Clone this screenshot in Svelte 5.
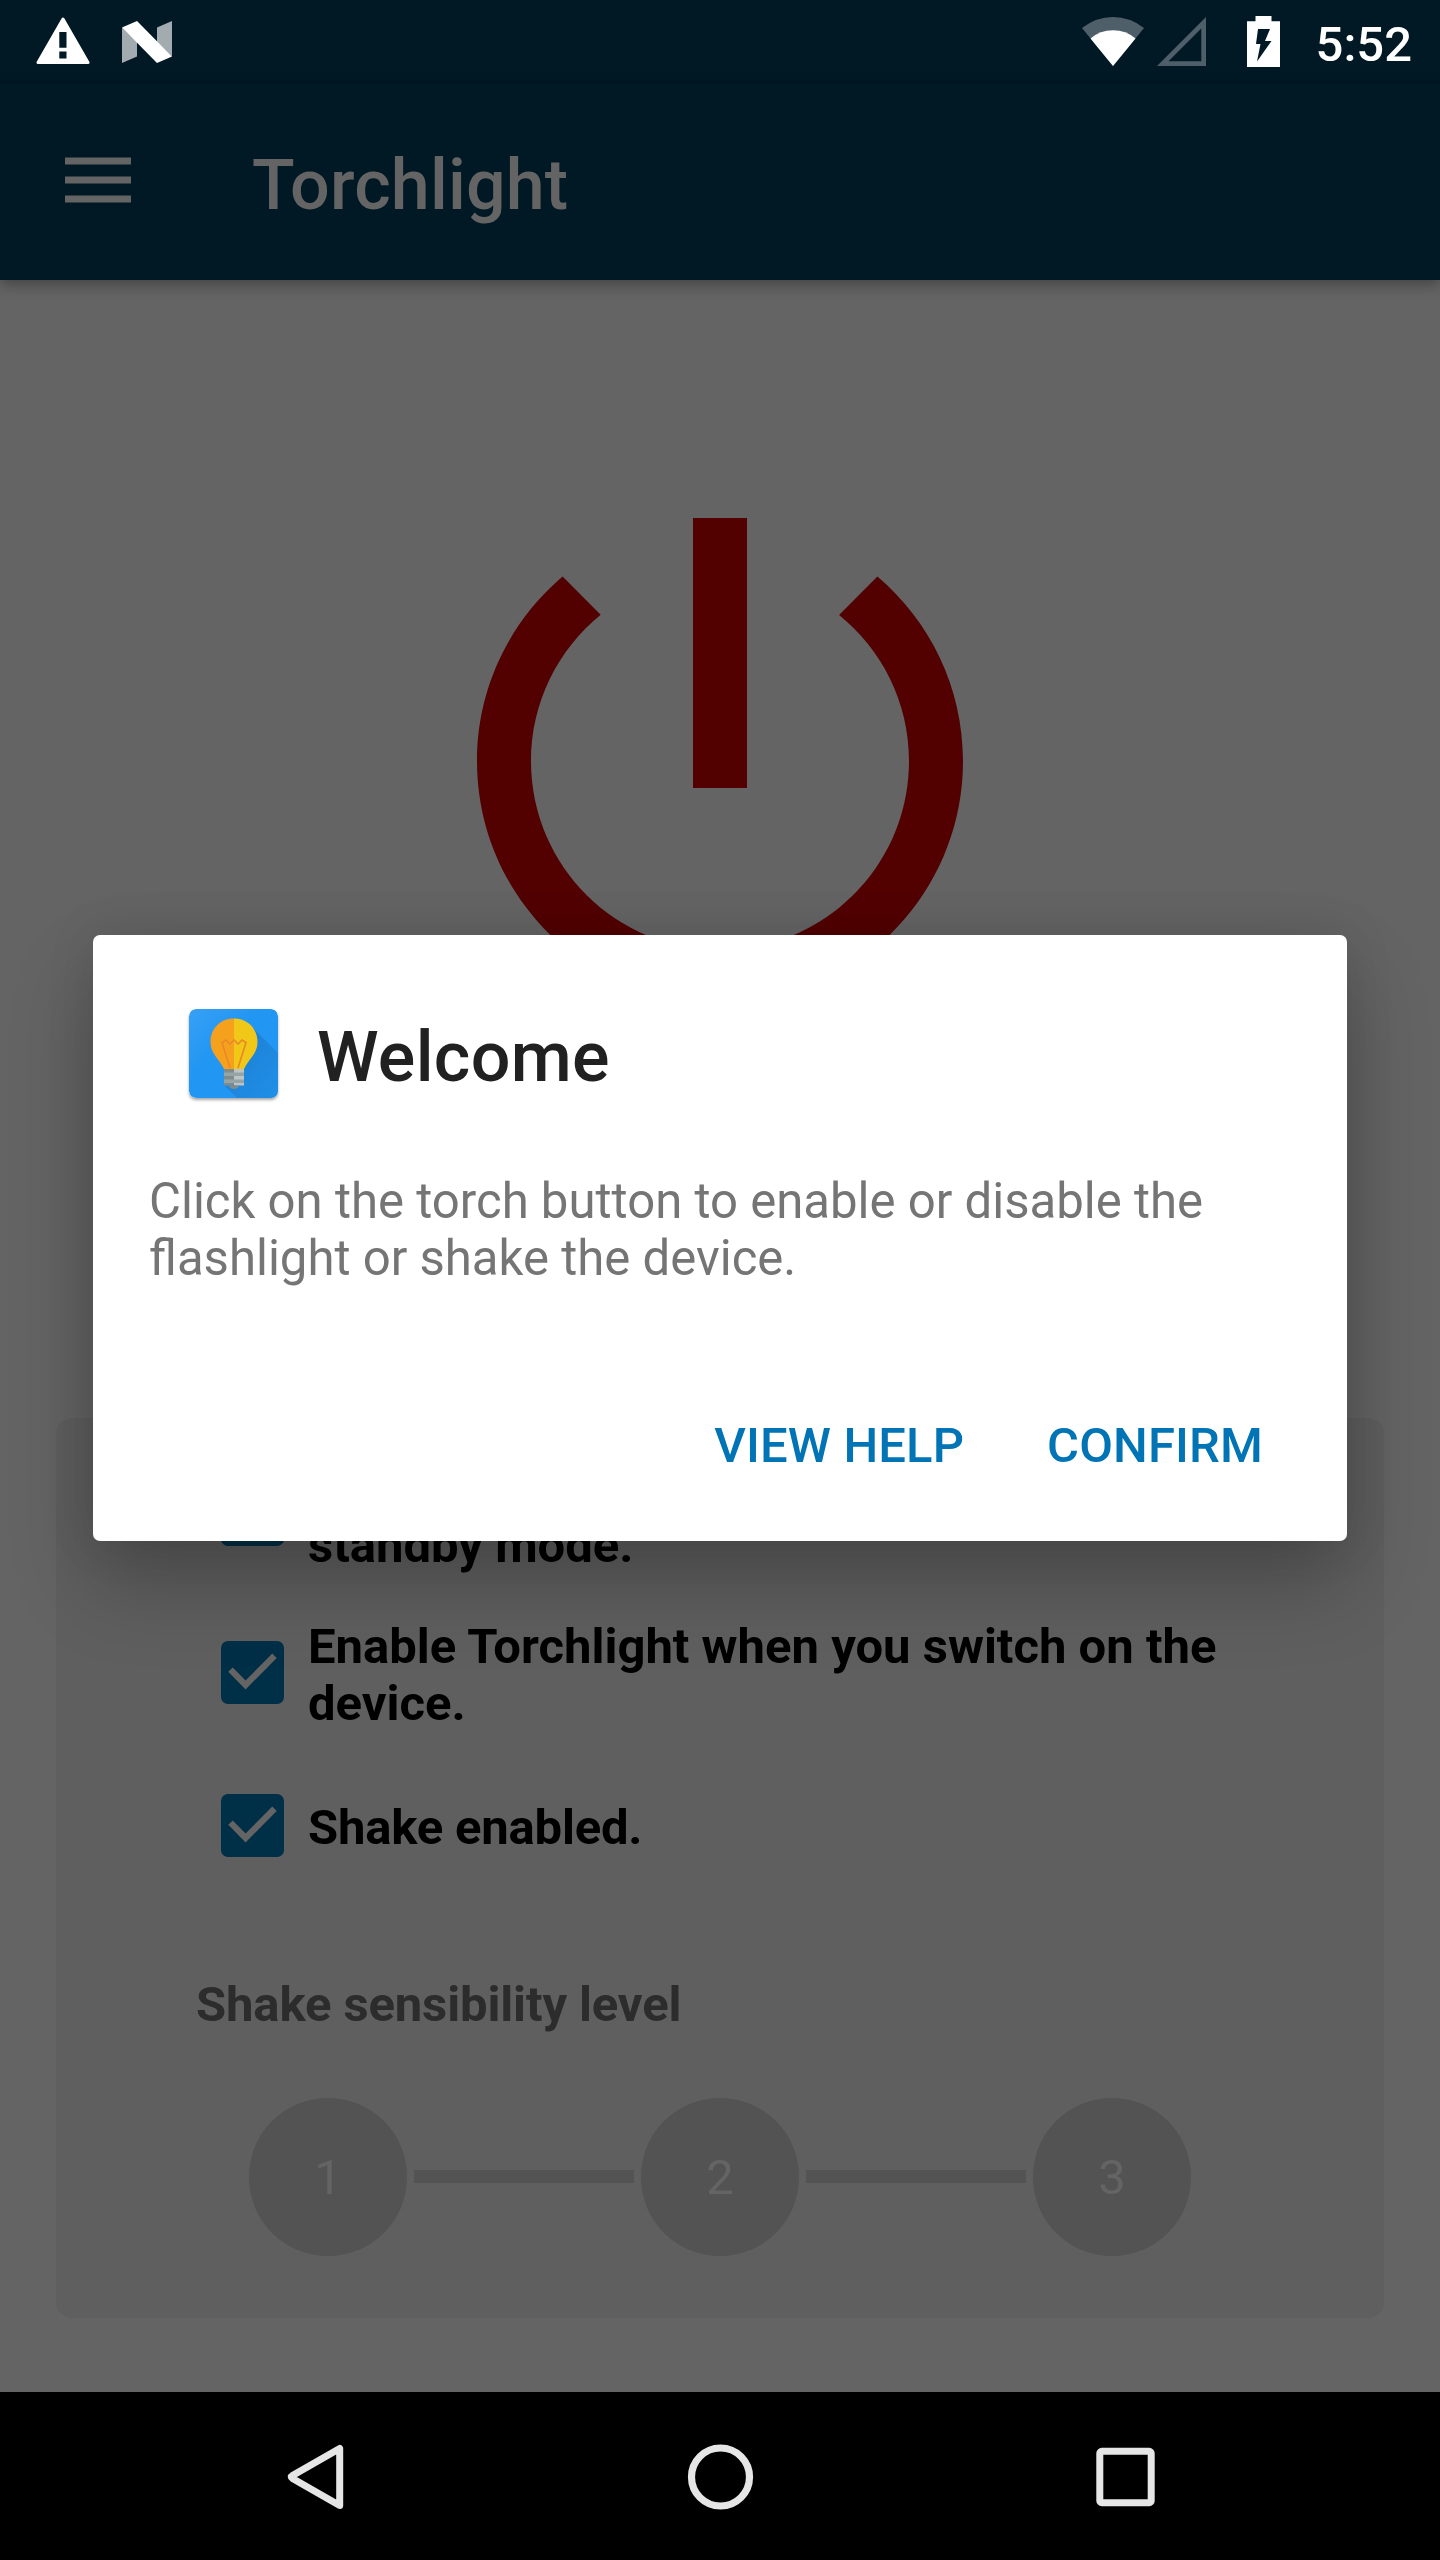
<script>
  const levels = [1, 2, 3];
</script>

{#snippet checkbox()}
  <svg class="box" viewBox="0 0 63 63">
    <rect width="63" height="63" rx="7" fill="#002f48" />
    <path d="M9.500 28.600 24.600 43.900 53.500 14.700" fill="none" stroke="#646464" stroke-width="6.300" />
  </svg>
{/snippet}

<div class="screen">
  <div class="status">
    <svg class="warn" viewBox="0 0 54 48">
      <path d="M27 2 52 45.500H2z" fill="#fff" stroke="#fff" stroke-width="3" stroke-linejoin="round" />
      <path d="M23.300 15h7.200v15.800h-7.200zM23.300 34.500h7.200v7h-7.200z" fill="#001925" />
    </svg>
    <svg class="nougat" viewBox="0 0 50 42">
      <path d="M0 6.500 15 21v14.500L0 42zM35 6.500 50 0v35.500L35 21z" fill="#a2abb0" />
      <path d="M0 6.500 15 0 50 35.500 35 42z" fill="#fff" />
    </svg>
    <span class="grow"></span>
    <svg class="wifi" viewBox="0 0 62 49">
      <path d="M0 11Q14 0 31 0T62 11L31 49z" fill="#4f5f69" />
      <path d="M8.500 21.500Q18 13.300 31 13.300T53.500 21.500L31 49z" fill="#fff" />
    </svg>
    <svg class="signal" viewBox="0 0 49 49">
      <path d="M49 0v49H0zM44.300 11.500 11.500 44.300h32.800z" fill="#4f5f69" fill-rule="evenodd" />
    </svg>
    <svg class="battery" viewBox="0 0 33 51">
      <path d="M8.500 0h16v5.300H33V51H0V5.300h8.500z" fill="#fff" />
      <path d="M11 13h12l-5 12h6.500L10 45.500l3.500-17.500H9z" fill="#001925" />
    </svg>
    <span class="time">5:52</span>
  </div>

  <header class="appbar">
    <svg class="menu" viewBox="0 0 66 46">
      <path d="M0 .6h66v7H0zM0 19.500h66v7H0zM0 38.400h66v7H0z" fill="#646464" />
    </svg>
    <h1>Torchlight</h1>
  </header>

  <main>
    <svg class="power" viewBox="0 0 24 24" fill="#520000">
      <path d="M13 3h-2v10h2V3zm4.830 2.170l-1.420 1.420C17.990 7.860 19 9.810 19 12c0 3.870-3.130 7-7 7s-7-3.130-7-7c0-2.190 1.010-4.140 2.580-5.420L6.170 5.170C4.230 6.820 3 9.260 3 12c0 4.970 4.030 9 9 9s9-4.030 9-9c0-2.740-1.230-5.180-3.170-6.830z" />
    </svg>

    <section class="panel">
      <div class="option first">
        {@render checkbox()}
        <span><br />standby mode.</span>
      </div>
      <div class="option">
        {@render checkbox()}
        <span>Enable Torchlight when you switch on the device.</span>
      </div>
      <div class="option last">
        {@render checkbox()}
        <span>Shake enabled.</span>
      </div>
      <h2>Shake sensibility level</h2>
      <div class="levels">
        {#each levels as level, i}
          {#if i > 0}<span class="line"></span>{/if}
          <span class="dot">{level}</span>
        {/each}
      </div>
    </section>
  </main>

  <nav>
    <svg viewBox="0 0 70 70">
      <path d="M59.700 6.500v57L12.500 36.500Q10 35 12.500 33.500z" fill="none" stroke="#e6e6e6" stroke-width="7" stroke-linejoin="round" />
    </svg>
    <svg viewBox="0 0 70 70">
      <circle cx="35.500" cy="35" r="29" fill="none" stroke="#e6e6e6" stroke-width="7.200" />
    </svg>
    <svg viewBox="0 0 70 70">
      <rect x="9.800" y="9.300" width="51.400" height="51.400" rx="2" fill="none" stroke="#e6e6e6" stroke-width="7" />
    </svg>
  </nav>

  <div class="dialog" role="dialog">
    <div class="head">
      <svg class="bulb" viewBox="0 0 89 89">
        <defs>
          <linearGradient id="tile" x1="0" y1="0" x2="1" y2="1">
            <stop offset="0" stop-color="#38a0f5" />
            <stop offset=".4" stop-color="#2196f3" />
            <stop offset="1" stop-color="#2196f3" />
          </linearGradient>
          <linearGradient id="cast" x1="0" y1="0" x2="1" y2="1">
            <stop offset="0" stop-color="#1c7cd0" />
            <stop offset="1" stop-color="#208fe8" />
          </linearGradient>
        </defs>
        <rect width="89" height="89" rx="7" fill="url(#tile)" />
        <path d="M62 17 89 44v38q0 7-7 7H48L35 76z" fill="url(#cast)" />
        <path d="M45 9.500C31 9.500 21.500 20 21.500 33c0 12 9 17 13.500 27h10z" fill="#f6a11d" />
        <path d="M45 9.500C59 9.500 68.500 20 68.500 33c0 12-9 17-13.500 27H45z" fill="#f1c818" />
        <path d="M41 59 33 33.500l4-2.500 4 4 4-4 4 4 4-4 4 2.500L49 59" fill="none" stroke="#e98a26" stroke-width="1.700" />
        <path d="M35 60h10v16.500H35z" fill="#7f8c8d" />
        <path d="M45 60h10v16.500H45z" fill="#bdc3c7" />
        <path d="M35 63.500h20v3.500H35zM35 70.500h20V74H35z" fill="#95a5a6" />
        <path d="M39.500 76.500h11Q49 80 45 80t-5.500-3.500z" fill="#7f8c8d" />
      </svg>
      <h3>Welcome</h3>
    </div>
    <p>Click on the torch button to enable or disable the flashlight or shake the device.</p>
    <div class="actions">
      <button>VIEW HELP</button>
      <button>CONFIRM</button>
    </div>
  </div>
</div>

<style>
  :global(body) {
    background: #646464;
  }
  .screen {
    position: relative;
    display: flex;
    flex-direction: column;
    width: 1440px;
    height: 2560px;
    overflow: hidden;
    background: #646464;
    font-family: Roboto, 'Liberation Sans', sans-serif;
    font-size: 49px;
    line-height: 57px;
  }
  svg {
    display: block;
    flex: none;
  }
  h1, h2, h3, p {
    margin: 0;
  }
  .status {
    display: flex;
    align-items: flex-start;
    height: 84px;
    box-sizing: border-box;
    padding: 16px 28px 0 36px;
    background: #001925;
  }
  .grow {
    flex: 1;
  }
  .warn {
    width: 54px;
    height: 48px;
    margin-top: 1px;
  }
  .nougat {
    width: 50px;
    height: 42px;
    margin: 5px 0 0 32px;
  }
  .wifi {
    width: 62px;
    height: 49px;
    margin-top: 1px;
  }
  .signal {
    width: 49px;
    height: 49px;
    margin: 1px 0 0 13px;
  }
  .battery {
    width: 33px;
    height: 51px;
    margin-left: 41px;
  }
  .time {
    margin-left: 36px;
    color: #fff;
    font-weight: 500;
  }
  .appbar {
    display: flex;
    align-items: center;
    height: 196px;
    box-sizing: border-box;
    padding: 0 65px 4px;
    background: #001925;
    box-shadow: 0 4px 14px rgba(0, 0, 0, 0.35);
  }
  .menu {
    width: 66px;
    height: 46px;
  }
  h1 {
    margin: 10px 0 0 121px;
    color: #646464;
    font-size: 70px;
    line-height: 82px;
    font-weight: 500;
    letter-spacing: 0.15px;
  }
  main {
    display: flex;
    flex: 1;
    flex-direction: column;
    align-items: center;
    padding-top: 157px;
  }
  .power {
    width: 648px;
    height: 648px;
  }
  .panel {
    width: 1328px;
    height: 900px;
    box-sizing: border-box;
    margin-top: 333px;
    padding: 17px 140px 0;
    border-radius: 16px;
    background: #5f5f5f;
  }
  .option {
    display: flex;
    align-items: center;
    gap: 24.500px;
    height: 158px;
    padding-left: 24.500px;
    color: #000;
    font-weight: 700;
  }
  .option.last {
    height: 149px;
    letter-spacing: -0.2px;
  }
  .option span {
    padding-top: 5px;
  }
  .option.last span {
    padding-top: 3px;
  }
  .box {
    width: 63px;
    height: 63px;
  }
  h2 {
    margin-top: 76px;
    color: #2c2c2c;
    font-size: 49px;
    line-height: 57px;
    font-weight: 700;
    letter-spacing: -0.13px;
  }
  .levels {
    display: flex;
    align-items: center;
    justify-content: center;
    gap: 7px;
    margin-top: 65px;
  }
  .dot {
    width: 157.500px;
    height: 157.500px;
    border-radius: 50%;
    background: #535353;
    color: #646464;
    text-align: center;
    line-height: 160px;
  }
  .line {
    width: 220.500px;
    height: 13px;
    background: #535353;
  }
  nav {
    display: flex;
    align-items: center;
    justify-content: center;
    gap: 335px;
    height: 168px;
    box-sizing: border-box;
    padding-top: 1px;
    background: #000;
  }
  nav svg {
    width: 70px;
    height: 70px;
  }
  .dialog {
    position: absolute;
    left: 93px;
    top: 935px;
    width: 1254px;
    height: 606px;
    box-sizing: border-box;
    padding: 74px 56px 0;
    border-radius: 7px;
    background: #fff;
    box-shadow: 0 42px 84px rgba(0, 0, 0, 0.24), 0 0 50px rgba(0, 0, 0, 0.1);
  }
  .head {
    display: flex;
    align-items: center;
    height: 89px;
    padding-left: 39.500px;
  }
  .bulb {
    width: 89px;
    height: 89px;
    border-radius: 7px;
    box-shadow: 0 2px 3px rgba(0, 0, 0, 0.35);
  }
  h3 {
    margin: 6px 0 0 39.500px;
    color: #212121;
    font-size: 70px;
    line-height: 82px;
    font-weight: 500;
    letter-spacing: 0.3px;
  }
  p {
    margin-top: 75px;
    color: #757575;
    font-size: 49.100px;
  }
  .actions {
    display: flex;
    justify-content: flex-end;
    gap: 83px;
    margin-top: 130px;
    padding-right: 28px;
  }
  button {
    padding: 0;
    border: 0;
    background: none;
    color: #0074b4;
    font: 500 49px/57px Roboto, 'Liberation Sans', sans-serif;
    letter-spacing: 0.12px;
  }
</style>
